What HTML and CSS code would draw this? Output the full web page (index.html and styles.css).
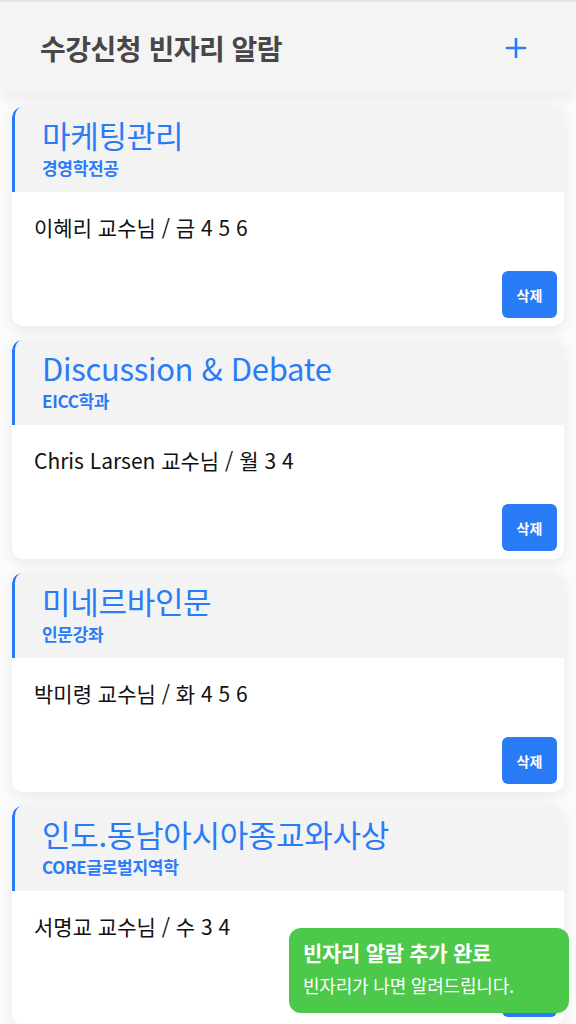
FILE: index.html
```html
<!DOCTYPE html>
<html lang="ko">
<head>
<meta charset="utf-8">
<title>수강신청 빈자리 알람</title>
<link rel="stylesheet" href="styles.css">
</head>
<body>
<header class="topbar">
  <h1 class="topbar-title">수강신청 빈자리 알람</h1>
  <button class="add-btn" aria-label="추가">
    <svg width="22" height="22" viewBox="0 0 22 22"><path d="M11 1v20M1 11h20" stroke="#2a7cf6" stroke-width="2.6" fill="none"/></svg>
  </button>
</header>
<main class="list">
  <section class="card">
    <div class="card-head">
      <div class="course">마케팅관리</div>
      <div class="dept">경영학전공</div>
    </div>
    <div class="card-body">
      <div class="info">이혜리 교수님 / 금 4 5 6</div>
      <button class="del-btn">삭제</button>
    </div>
  </section>
  <section class="card">
    <div class="card-head">
      <div class="course">Discussion &amp; Debate</div>
      <div class="dept">EICC학과</div>
    </div>
    <div class="card-body">
      <div class="info">Chris Larsen 교수님 / 월 3 4</div>
      <button class="del-btn">삭제</button>
    </div>
  </section>
  <section class="card">
    <div class="card-head">
      <div class="course">미네르바인문</div>
      <div class="dept">인문강좌</div>
    </div>
    <div class="card-body">
      <div class="info">박미령 교수님 / 화 4 5 6</div>
      <button class="del-btn">삭제</button>
    </div>
  </section>
  <section class="card">
    <div class="card-head">
      <div class="course">인도.동남아시아종교와사상</div>
      <div class="dept">CORE글로벌지역학</div>
    </div>
    <div class="card-body">
      <div class="info">서명교 교수님 / 수 3 4</div>
      <button class="del-btn">삭제</button>
    </div>
  </section>
</main>
<div class="toast">
  <div class="toast-title">빈자리 알람 추가 완료</div>
  <div class="toast-text">빈자리가 나면 알려드립니다.</div>
</div>
</body>
</html>
```
FILE: styles.css
```css
* { box-sizing: border-box; }
html, body { margin: 0; padding: 0; }
body {
  background: #fbfbfb;
  font-family: "Noto Sans CJK KR", "Noto Sans", sans-serif;
  color: #111;
  border-top: 2px solid #e4e4e4;
}
.topbar {
  height: 92px;
  background: #f4f4f4;
  display: flex;
  align-items: center;
  justify-content: space-between;
  padding: 0 49px 0 40px;
  border-radius: 0 0 14px 14px;
  box-shadow: 0 6px 14px rgba(0,0,0,0.06);
}
.topbar-title {
  margin: 0;
  font-size: 28px;
  font-weight: 700;
  color: #474747;
  letter-spacing: -0.5px;
}
.add-btn {
  background: none;
  border: 0;
  padding: 0;
  width: 22px;
  height: 22px;
  display: flex;
}
.list {
  display: flex;
  flex-direction: column;
  gap: 14px;
  padding: 13px 12px 40px;
}
.card {
  background: #fff;
  border-radius: 10px;
  overflow: hidden;
  box-shadow: 0 4px 14px rgba(0,0,0,0.08);
}
.card-head {
  height: 85px;
  background: #f3f3f3;
  border-left: 3px solid #2a7cf6;
  border-top-left-radius: 10px;
  padding: 8px 0 0 27px;
}
.course {
  font-size: 31px;
  line-height: 40px;
  color: #2a7cf6;
  letter-spacing: -0.3px;
}
.dept {
  margin-top: 1px;
  font-size: 17px;
  line-height: 24px;
  font-weight: 700;
  color: #2a7cf6;
  letter-spacing: -0.3px;
}
.card-body {
  height: 134px;
  display: flex;
  flex-direction: column;
  padding: 21px 7px 8px 22px;
}
.info {
  font-size: 21px;
  line-height: 28px;
  color: #111;
}
.del-btn {
  margin-top: auto;
  align-self: flex-end;
  width: 55px;
  height: 47px;
  border: 0;
  border-radius: 6px;
  background: #2a7cf6;
  color: #fff;
  font-family: inherit;
  font-size: 14px;
  font-weight: 700;
}
.toast {
  position: fixed;
  left: 289px;
  top: 928px;
  width: 280px;
  height: 85px;
  background: #4cc84a;
  border-radius: 12px;
  padding: 9px 14px 0;
  color: #fff;
}
.toast-title {
  font-size: 21px;
  line-height: 30px;
  font-weight: 700;
  letter-spacing: -0.3px;
}
.toast-text {
  margin-top: 4px;
  font-size: 18px;
  line-height: 28px;
  letter-spacing: -0.2px;
}
```
